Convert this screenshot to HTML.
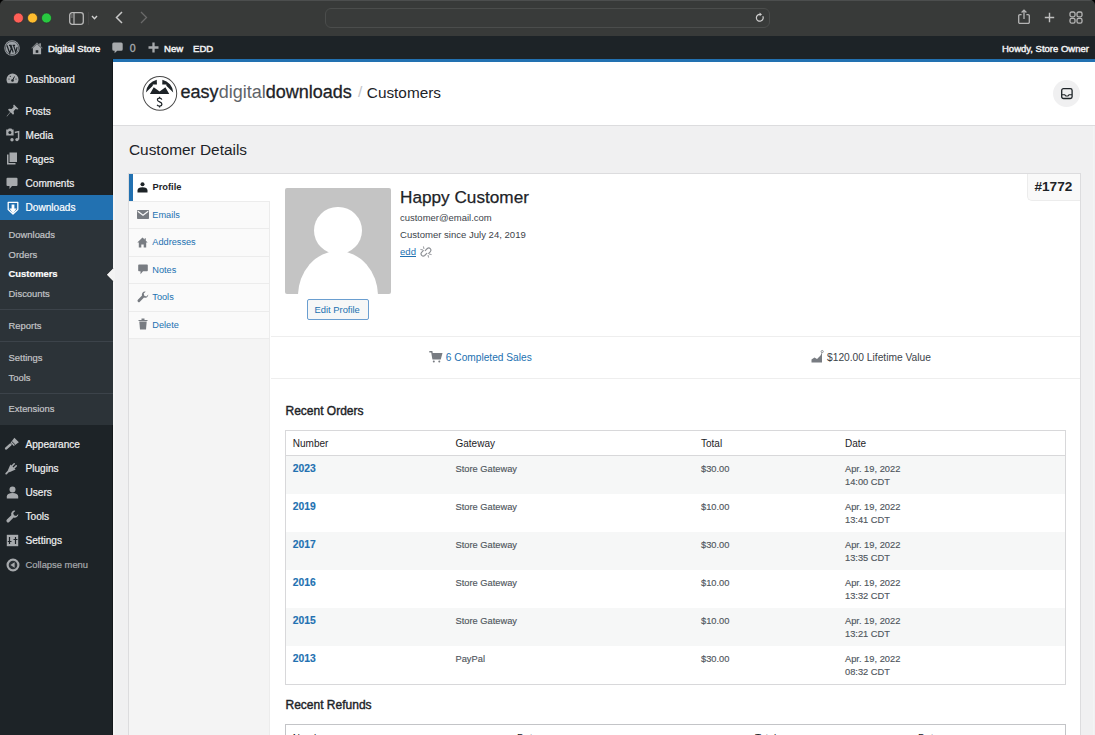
<!DOCTYPE html><html><head><meta charset="utf-8"><style>
*{margin:0;padding:0;box-sizing:border-box}
html,body{width:1095px;height:735px;overflow:hidden;background:#f0f0f1;font-family:"Liberation Sans",sans-serif}
.t{position:absolute;white-space:nowrap;line-height:1}
.a{position:absolute}
svg{position:absolute;overflow:visible}
</style></head><body>
<div class="a" style="left:0;top:0;width:1095px;height:36px;background:#383a39;border-top:1px solid #4c4e4e"></div>
<svg style="left:0;top:0" width="5" height="5"><path d="M0 0H5A5 5 0 0 0 0 5Z" fill="#000"/></svg>
<svg style="left:1090px;top:0" width="5" height="5"><path d="M5 0H0A5 5 0 0 1 5 5Z" fill="#000"/></svg>
<svg style="left:0;top:0" width="60" height="36"><circle cx="18.4" cy="18" r="5" fill="#ff5f57" stroke="#2a2a2a" stroke-width=".6"/><circle cx="32.5" cy="18" r="5" fill="#febc2e" stroke="#2a2a2a" stroke-width=".6"/><circle cx="46.5" cy="18" r="5" fill="#28c840" stroke="#2a2a2a" stroke-width=".6"/></svg>
<svg style="left:69px;top:12px" width="15" height="13"><rect x="0.7" y="0.7" width="13.6" height="11.6" rx="2.5" fill="none" stroke="#b8b8b8" stroke-width="1.3"/><line x1="5" y1="1" x2="5" y2="12" stroke="#b8b8b8" stroke-width="1.2"/><rect x="1.8" y="2.5" width="2" height="1" fill="#888"/><rect x="1.8" y="4.5" width="2" height="1" fill="#888"/></svg>
<div class="a" style="left:88px;top:12px;width:1px;height:13px;background:#444"></div>
<svg style="left:91px;top:15px" width="7" height="5"><path d="M1 1L3.5 3.7L6 1" fill="none" stroke="#d0d0d0" stroke-width="1.4"/></svg>
<svg style="left:115px;top:11px" width="8" height="13"><path d="M7 1L1.5 6.5L7 12" fill="none" stroke="#c8c8c8" stroke-width="1.5"/></svg>
<svg style="left:140px;top:11px" width="8" height="13"><path d="M1 1L6.5 6.5L1 12" fill="none" stroke="#6a6a6a" stroke-width="1.3"/></svg>
<div class="a" style="left:325px;top:8px;width:445px;height:20px;border-radius:6px;background:#393b3a;border:1px solid #4b4d4c"></div>
<svg style="left:755px;top:12px" width="10" height="11"><path d="M7.8 4.2A3.4 3.4 0 1 1 5 2.4" fill="none" stroke="#cfcfcf" stroke-width="1.2"/><path d="M4.6 0.6L7 2.5L4.6 4.3Z" fill="#cfcfcf"/></svg>
<svg style="left:1018px;top:9px" width="12" height="15"><path d="M3.6 5.6H1.9A1.2 1.2 0 0 0 .7 6.8V13.2A1.2 1.2 0 0 0 1.9 14.4H10.1A1.2 1.2 0 0 0 11.3 13.2V6.8A1.2 1.2 0 0 0 10.1 5.6H8.4" fill="none" stroke="#b4b4b4" stroke-width="1.3"/><path d="M6 10V1.3M3.6 3.5L6 1.1L8.4 3.5" fill="none" stroke="#b4b4b4" stroke-width="1.3"/></svg>
<svg style="left:1044px;top:12px" width="11" height="11"><path d="M5.5 .8V10.2M.8 5.5H10.2" stroke="#c0c0c0" stroke-width="1.4"/></svg>
<svg style="left:1069px;top:11px" width="14" height="13"><g fill="none" stroke="#b4b4b4" stroke-width="1.3"><rect x="1" y="1" width="5" height="4.8" rx="1.6"/><rect x="8" y="1" width="5" height="4.8" rx="1.6"/><rect x="1" y="7.3" width="5" height="4.8" rx="1.6"/><rect x="8" y="7.3" width="5" height="4.8" rx="1.6"/></g></svg>
<div class="a" style="left:0;top:36px;width:1095px;height:23px;background:#1d2327"></div>
<svg style="left:3.6px;top:40.2px" width="16" height="16" viewBox="0 0 20 20"><circle cx="10" cy="10" r="9.6" fill="#9ea3a8"/><circle cx="10" cy="10" r="8.3" fill="none" stroke="#2a2f33" stroke-width=".7"/><path d="M3.6 6.6L7.2 16.6L9.1 11L7.6 6.6M6.2 6.6H9.4M10.8 6.6H13.9M11.9 6.6L14.7 15.2L16.4 9M8.7 6.6L11.5 15.6" fill="none" stroke="#1d2327" stroke-width="1.5"/></svg>
<svg style="left:30.5px;top:41.5px" width="12" height="13" viewBox="0 0 12 13"><path d="M6 .4L.2 6.2H1.9V12.2H10.1V6.2H11.8L9.8 4.2V1.2H8.4V2.8Z" fill="#a7aaad"/><path d="M.9 6.6L6 1.6L11.1 6.6" fill="none" stroke="#1d2327" stroke-width=".7"/><rect x="4.7" y="8.2" width="2.6" height="2.6" fill="#1d2327"/></svg>
<div class="t" style="left:48.00px;top:43.77px;font-size:9.6px;font-weight:400;color:#f0f0f1;-webkit-text-stroke:0.45px #f0f0f1">Digital Store</div>

<svg style="left:112px;top:42px" width="11" height="12" viewBox="0 0 11 12"><path d="M1.8 .5H9.2A1.5 1.5 0 0 1 10.7 2V7.3A1.5 1.5 0 0 1 9.2 8.8H5.2L2.6 11.3V8.8H1.8A1.5 1.5 0 0 1 .3 7.3V2A1.5 1.5 0 0 1 1.8 .5Z" fill="#a7aaad"/></svg>
<div class="t" style="left:129.80px;top:43.03px;font-size:10.6px;font-weight:400;color:#a7aaad;-webkit-text-stroke:0.3px #a7aaad">0</div>

<svg style="left:148px;top:42.3px" width="11" height="11"><path d="M5.5 .5V10.5M.5 5.5H10.5" stroke="#a7aaad" stroke-width="2.3"/></svg>
<div class="t" style="left:164.00px;top:43.77px;font-size:9.6px;font-weight:400;color:#f0f0f1;-webkit-text-stroke:0.45px #f0f0f1">New</div>

<div class="t" style="left:193.00px;top:43.77px;font-size:9.6px;font-weight:400;color:#f0f0f1;-webkit-text-stroke:0.45px #f0f0f1">EDD</div>

<div class="t" style="left:1002.00px;top:43.96px;font-size:9.5px;font-weight:400;color:#f0f0f1;-webkit-text-stroke:0.45px #f0f0f1">Howdy, Store Owner</div>

<div class="a" style="left:113px;top:59px;width:982px;height:3px;background:#2271b1"></div>
<div class="a" style="left:0;top:59px;width:113px;height:676px;background:#1d2327"></div>
<div class="a" style="left:0;top:195px;width:113px;height:25px;background:#2271b1"></div>
<div class="a" style="left:0;top:220px;width:113px;height:204.5px;background:#2c3338"></div>
<div class="a" style="left:0;top:308.5px;width:113px;height:1px;background:#3c434a"></div>
<div class="a" style="left:0;top:340.5px;width:113px;height:1px;background:#3c434a"></div>
<div class="a" style="left:0;top:392.5px;width:113px;height:1px;background:#3c434a"></div>
<div class="a" style="left:112px;top:59px;width:1px;height:136px;background:#14181b"></div>
<div class="a" style="left:112px;top:425px;width:1px;height:310px;background:#14181b"></div>
<div class="a" style="left:113px;top:126px;width:2px;height:609px;background:#f5f5f5"></div>
<svg style="left:106px;top:267.5px" width="9" height="14"><path d="M7 0.5L0.8 6.8L7 13.1" fill="none" stroke="#0c0f11" stroke-width="0.9"/><path d="M7 0.5L0.8 6.8L7 13.1H9V0.5Z" fill="#f3f3f3"/></svg>
<div class="t" style="left:25.50px;top:75.25px;font-size:10.1px;font-weight:400;color:#f0f0f1;-webkit-text-stroke:0.2px currentColor">Dashboard</div>

<div class="t" style="left:25.50px;top:106.95px;font-size:10.1px;font-weight:400;color:#f0f0f1;-webkit-text-stroke:0.2px currentColor">Posts</div>

<div class="t" style="left:25.50px;top:130.65px;font-size:10.1px;font-weight:400;color:#f0f0f1;-webkit-text-stroke:0.2px currentColor">Media</div>

<div class="t" style="left:25.50px;top:154.85px;font-size:10.1px;font-weight:400;color:#f0f0f1;-webkit-text-stroke:0.2px currentColor">Pages</div>

<div class="t" style="left:25.50px;top:179.05px;font-size:10.1px;font-weight:400;color:#f0f0f1;-webkit-text-stroke:0.2px currentColor">Comments</div>

<div class="t" style="left:25.50px;top:203.05px;font-size:10.1px;font-weight:400;color:#fff;-webkit-text-stroke:0.2px currentColor">Downloads</div>

<div class="t" style="left:25.50px;top:440.15px;font-size:10.1px;font-weight:400;color:#f0f0f1;-webkit-text-stroke:0.2px currentColor">Appearance</div>

<div class="t" style="left:25.50px;top:464.05px;font-size:10.1px;font-weight:400;color:#f0f0f1;-webkit-text-stroke:0.2px currentColor">Plugins</div>

<div class="t" style="left:25.50px;top:488.05px;font-size:10.1px;font-weight:400;color:#f0f0f1;-webkit-text-stroke:0.2px currentColor">Users</div>

<div class="t" style="left:25.50px;top:512.05px;font-size:10.1px;font-weight:400;color:#f0f0f1;-webkit-text-stroke:0.2px currentColor">Tools</div>

<div class="t" style="left:25.50px;top:535.95px;font-size:10.1px;font-weight:400;color:#f0f0f1;-webkit-text-stroke:0.2px currentColor">Settings</div>

<div class="t" style="left:25.50px;top:559.64px;font-size:9.4px;font-weight:400;color:#a7aaad;-webkit-text-stroke:0.2px #a7aaad">Collapse menu</div>

<div class="t" style="left:8.60px;top:229.64px;font-size:9.4px;font-weight:400;color:#c3c4c7;-webkit-text-stroke:0.2px currentColor">Downloads</div>

<div class="t" style="left:8.60px;top:249.64px;font-size:9.4px;font-weight:400;color:#c3c4c7;-webkit-text-stroke:0.2px currentColor">Orders</div>

<div class="t" style="left:8.60px;top:269.44px;font-size:9.4px;font-weight:700;color:#fff;-webkit-text-stroke:0.2px currentColor">Customers</div>

<div class="t" style="left:8.60px;top:288.84px;font-size:9.4px;font-weight:400;color:#c3c4c7;-webkit-text-stroke:0.2px currentColor">Discounts</div>

<div class="t" style="left:8.60px;top:321.04px;font-size:9.4px;font-weight:400;color:#c3c4c7;-webkit-text-stroke:0.2px currentColor">Reports</div>

<div class="t" style="left:8.60px;top:352.84px;font-size:9.4px;font-weight:400;color:#c3c4c7;-webkit-text-stroke:0.2px currentColor">Settings</div>

<div class="t" style="left:8.60px;top:372.54px;font-size:9.4px;font-weight:400;color:#c3c4c7;-webkit-text-stroke:0.2px currentColor">Tools</div>

<div class="t" style="left:8.60px;top:404.34px;font-size:9.4px;font-weight:400;color:#c3c4c7;-webkit-text-stroke:0.2px currentColor">Extensions</div>

<svg style="left:6px;top:73px" width="13" height="11" viewBox="0 0 13 11"><path d="M6.5 .5A6 6 0 0 0 .5 6.5C.5 8 1 9.3 1.8 10.3H11.2C12 9.3 12.5 8 12.5 6.5A6 6 0 0 0 6.5 .5Z" fill="#a7aaad"/><circle cx="6.5" cy="7.5" r="1.3" fill="#1d2327"/><path d="M6.5 7.5L8.5 3.5" stroke="#1d2327" stroke-width="1"/><circle cx="3" cy="6" r=".6" fill="#1d2327"/><circle cx="4.3" cy="3.3" r=".6" fill="#1d2327"/><circle cx="10" cy="6" r=".6" fill="#1d2327"/></svg>
<svg style="left:6px;top:104px" width="13" height="13" viewBox="0 0 13 13"><path d="M8 .5L12.5 5L11.3 5.6L9.6 5.1L7.6 7.2L8 9.7L7 10.7L4.6 8.3L1 12.5L.6 12.2L4.2 8L2 5.7L3 4.7L5.6 5L7.6 3L7.2 1.5Z" fill="#a7aaad"/></svg>
<svg style="left:5px;top:127.5px" width="15" height="14" viewBox="0 0 15 14"><path d="M1.2 1.6H3L3.8 .6H6.4L7.2 1.6H8.6V7.6H1.2Z" fill="#a7aaad"/><circle cx="4.9" cy="4.5" r="1.5" fill="#1d2327"/><path d="M9.8 4.6L13.6 3.6V11.4" fill="none" stroke="#a7aaad" stroke-width="1.5"/><circle cx="7" cy="11.8" r="1.7" fill="#a7aaad"/><circle cx="12" cy="11.6" r="1.7" fill="#a7aaad"/></svg>
<svg style="left:6px;top:152px" width="12" height="13" viewBox="0 0 12 13"><path d="M3.5 .5H11V10H3.5Z" fill="#a7aaad"/><path d="M1 2.5H2.5V11H9.5V12.5H1Z" fill="#a7aaad"/></svg>
<svg style="left:6px;top:177px" width="12" height="13" viewBox="0 0 12 13"><path d="M1.5 .8H10.5A1 1 0 0 1 11.5 1.8V8A1 1 0 0 1 10.5 9H6L3.5 12V9H1.5A1 1 0 0 1 .5 8V1.8A1 1 0 0 1 1.5 .8Z" fill="#a7aaad"/></svg>
<svg style="left:7px;top:200.5px" width="12" height="14" viewBox="0 0 12 14"><path d="M1.2 8.6V1.3H10.8V8.6L6 13Z" fill="none" stroke="#fff" stroke-width="1.3" stroke-linejoin="round"/><path d="M4.6 3.4H7.4V7.6H9.6L6 12.4L2.4 7.6H4.6Z" fill="#fff"/></svg>
<svg style="left:4px;top:436px" width="17" height="15" viewBox="0 0 17 15"><path d="M2.2 12.4L6.4 8.6" stroke="#a7aaad" stroke-width="2.6" stroke-linecap="round"/><path d="M6.64 6.84L10.34 1.74L14.86 6.26L9.76 9.96Z" fill="#a7aaad"/><path d="M7.9 5.6L11 8.7" stroke="#1d2327" stroke-width=".9"/></svg>
<svg style="left:4px;top:460px" width="17" height="15" viewBox="0 0 17 15"><path d="M2.2 13.6L4.6 11.2" stroke="#a7aaad" stroke-width="1.8" stroke-linecap="round"/><path d="M3.75 10.55L6.45 4.45L11.55 9.55L5.45 12.25Z" fill="#a7aaad"/><path d="M7.98 5.98L10.18 3.78M10.02 8.02L12.22 5.82" stroke="#a7aaad" stroke-width="1.6" stroke-linecap="round"/></svg>
<svg style="left:6px;top:485.8px" width="13" height="13" viewBox="0 0 13 13"><circle cx="6.5" cy="3.5" r="3" fill="#a7aaad"/><path d="M.8 12.5V10.5C.8 8.5 3 7 6.5 7S12.2 8.5 12.2 10.5V12.5Z" fill="#a7aaad"/></svg>
<svg style="left:6px;top:509.8px" width="13" height="13" viewBox="0 0 13 13"><path d="M8.8 .5A3.6 3.6 0 0 0 5.3 5.2L.9 9.6A1.6 1.6 0 0 0 3.2 11.9L7.6 7.5A3.6 3.6 0 0 0 12.3 4L10.2 6.1L7.9 5.3L7.2 3L9.3 1A3.6 3.6 0 0 0 8.8 .5Z" fill="#a7aaad"/></svg>
<svg style="left:6px;top:533.8px" width="13" height="13" viewBox="0 0 13 13"><rect x=".8" y=".8" width="11.4" height="11.4" fill="#a7aaad"/><path d="M3.5 3V10M9.5 3V10M7.5 5.5H11.5M1.8 7.5H5.5" stroke="#1d2327" stroke-width="1.2"/></svg>
<svg style="left:5.5px;top:557.5px" width="14" height="14" viewBox="0 0 14 14"><circle cx="7" cy="7" r="5.4" fill="#2a3035" stroke="#a7aaad" stroke-width="2.2"/><path d="M8.6 4.2V9.8L4.4 7Z" fill="#a7aaad"/></svg>
<div class="a" style="left:113px;top:62px;width:982px;height:64px;background:#fff;border-bottom:1px solid #dcdcde"></div>
<svg style="left:141px;top:74px" width="38" height="39" viewBox="0 0 716 735"><circle cx="355" cy="366" r="318" fill="#fff" stroke="#4a4a4a" stroke-width="19"/><path d="M92 348A264 264 0 0 1 297 108L300 200L222 200L222 222Z" fill="#1d2327"/><path d="M608 348A264 264 0 0 0 403 108L400 200L478 200L478 222Z" fill="#1d2327"/><path d="M168 378L240 252L350 328L460 252L532 378Z" fill="#1d2327"/><path d="M392 482C382 448 308 442 310 490C313 532 394 522 394 568C394 612 322 614 304 582M350 428V458M350 604V632" fill="none" stroke="#1d2327" stroke-width="24"/></svg>
<div class="t" style="left:180.6px;top:83.36px;font-size:18px;color:#1d2327"><span style="-webkit-text-stroke:0.3px #1d2327">easy</span><span style="color:#5f6469">digital</span><span style="-webkit-text-stroke:0.3px #1d2327">downloads</span></div>
<div class="t" style="left:358.00px;top:84.38px;font-size:15.5px;font-weight:400;color:#c3c4c7;">/</div>

<div class="t" style="left:366.80px;top:84.51px;font-size:15.35px;font-weight:400;color:#1d2327;">Customers</div>

<div class="a" style="left:1053px;top:80px;width:27px;height:27px;border-radius:50%;background:#f0f0f1"></div>
<svg style="left:1061px;top:88px" width="12" height="11" viewBox="0 0 12 11"><rect x=".7" y=".7" width="10.4" height="9.8" rx="1.8" fill="none" stroke="#1d2327" stroke-width="1.3"/><path d="M1 6.8H3.8L4.8 8H7L8 6.8H11" fill="none" stroke="#1d2327" stroke-width="1.1"/></svg>
<div class="t" style="left:129.00px;top:142.26px;font-size:15.4px;font-weight:400;color:#1d2327;">Customer Details</div>

<div class="a" style="left:128px;top:173px;width:953px;height:600px;background:#fff;border:1px solid #dcdcde"></div>
<div class="a" style="left:129px;top:174px;width:141px;height:600px;background:#f4f4f4;border-right:1px solid #ececec"></div>
<div class="a" style="left:129px;top:174px;width:142px;height:27.0px;background:#fff"></div>
<div class="a" style="left:129px;top:174px;width:4px;height:27.0px;background:#2271b1"></div>
<div class="a" style="left:129px;top:201.0px;width:141px;height:27.4px;background:#fafafa;border-top:1px solid #ececec;border-right:1px solid #ececec"></div>
<div class="a" style="left:129px;top:228.4px;width:141px;height:27.3px;background:#fafafa;border-top:1px solid #ececec;border-right:1px solid #ececec"></div>
<div class="a" style="left:129px;top:255.7px;width:141px;height:27.5px;background:#fafafa;border-top:1px solid #ececec;border-right:1px solid #ececec"></div>
<div class="a" style="left:129px;top:283.2px;width:141px;height:27.4px;background:#fafafa;border-top:1px solid #ececec;border-right:1px solid #ececec"></div>
<div class="a" style="left:129px;top:310.6px;width:141px;height:27.4px;background:#fafafa;border-top:1px solid #ececec;border-right:1px solid #ececec"></div>
<div class="a" style="left:129px;top:337.6px;width:141px;height:1px;background:#ececec"></div>
<div class="t" style="left:152.50px;top:183.13px;font-size:9.3px;font-weight:700;color:#1d2327;">Profile</div>

<div class="t" style="left:152.30px;top:210.71px;font-size:9.2px;font-weight:400;color:#2271b1;">Emails</div>

<div class="t" style="left:152.30px;top:238.01px;font-size:9.2px;font-weight:400;color:#2271b1;">Addresses</div>

<div class="t" style="left:152.30px;top:265.51px;font-size:9.2px;font-weight:400;color:#2271b1;">Notes</div>

<div class="t" style="left:152.30px;top:293.01px;font-size:9.2px;font-weight:400;color:#2271b1;">Tools</div>

<div class="t" style="left:152.30px;top:320.51px;font-size:9.2px;font-weight:400;color:#2271b1;">Delete</div>

<svg style="left:137px;top:182px" width="11" height="11" viewBox="0 0 11 11"><circle cx="5.5" cy="2.3" r="2" fill="#1d2327"/><path d="M.5 10.5V8.5C.5 6.5 2.5 5.3 5.5 5.3S10.5 6.5 10.5 8.5V10.5Z" fill="#1d2327"/></svg>
<svg style="left:137px;top:210px" width="12" height="9" viewBox="0 0 12 9"><rect x="0" y="0" width="12" height="9" rx=".8" fill="#787c82"/><path d="M.8 1.2L6 5.2L11.2 1.2" fill="none" stroke="#fafafa" stroke-width="1.2"/></svg>
<svg style="left:137px;top:237px" width="11" height="11" viewBox="0 0 11 11"><path d="M5.5.5L.3 5.5H1.8V10.5H4.3V7.5H6.7V10.5H9.2V5.5H10.7L8.8 3.7V1.3H7.7V2.6Z" fill="#787c82"/></svg>
<svg style="left:138px;top:264.3px" width="10" height="11" viewBox="0 0 10 11"><path d="M1 .5H9A.8.8 0 0 1 9.8 1.3V6.5A.8.8 0 0 1 9 7.3H5L2.5 10.2V7.3H1A.8.8 0 0 1 .2 6.5V1.3A.8.8 0 0 1 1 .5Z" fill="#787c82"/></svg>
<svg style="left:137px;top:291px" width="12" height="12" viewBox="0 0 12 12"><path d="M8.2 .4A3.2 3.2 0 0 0 5 4.6L.9 8.7A1.4 1.4 0 0 0 2.9 10.7L7 6.6A3.2 3.2 0 0 0 11.3 3.5L9.4 5.4L7.3 4.7L6.7 2.6L8.6 .7Z" fill="#787c82"/></svg>
<svg style="left:138px;top:318px" width="10" height="12" viewBox="0 0 10 12"><path d="M.5 2H9.5V3H.5ZM3.5 .5H6.5V2H3.5Z" fill="#787c82"/><path d="M1.3 3.6H8.7L8 11.5H2Z" fill="#787c82"/></svg>
<div class="a" style="left:1027px;top:174px;width:53px;height:27px;background:#f9f9f9;border-left:1px solid #ececec;border-bottom:1px solid #ececec;border-bottom-left-radius:5px"></div>
<div class="t" style="left:1034.50px;top:179.89px;font-size:13.6px;font-weight:700;color:#1d2327;">#1772</div>

<div class="a" style="left:284.7px;top:188.2px;width:106px;height:105.6px;background:#c4c4c4;border-radius:2px;overflow:hidden"><div class="a" style="left:29.5px;top:18.5px;width:47.6px;height:47.6px;border-radius:50%;background:#fff"></div><div class="a" style="left:13.3px;top:63.2px;width:79.7px;height:90px;border-radius:50%;background:#fff"></div></div>
<div class="a" style="left:306.7px;top:298.8px;width:62px;height:21.3px;border:1px solid #6a9ed0;border-radius:2px;background:#f6f7f7"></div>
<div class="t" style="left:314.50px;top:305.04px;font-size:9.4px;font-weight:400;color:#2271b1;">Edit Profile</div>

<div class="t" style="left:400.00px;top:189.44px;font-size:17.2px;font-weight:400;color:#1d2327;-webkit-text-stroke:0.25px #1d2327">Happy Customer</div>

<div class="t" style="left:400.00px;top:212.58px;font-size:9.47px;font-weight:400;color:#3c434a;">customer@email.com</div>

<div class="t" style="left:400.00px;top:229.71px;font-size:9.56px;font-weight:400;color:#3c434a;">Customer since July 24, 2019</div>

<div class="t" style="left:400.00px;top:246.77px;font-size:9.6px;font-weight:400;color:#2271b1;text-decoration:underline;text-decoration-thickness:0.6px;text-underline-offset:1.2px">edd</div>

<svg style="left:420px;top:246px" width="12" height="12" viewBox="0 0 12 12"><g fill="none" stroke="#8c8f94" stroke-width="1.15" stroke-linecap="round"><path d="M5.2 4.6L7.3 2.5A2.2 2.2 0 0 1 10.4 5.6L8.7 7.3"/><path d="M3.3 4.7L1.6 6.4A2.2 2.2 0 0 0 4.7 9.5L6.8 7.4"/><path d="M3.5 .8L3.9 2.6M.8 3.5L2.6 3.9M8.5 11.2L8.1 9.4M11.2 8.5L9.4 8.1" stroke-width=".9"/></g></svg>
<div class="a" style="left:271px;top:336px;width:809px;height:1px;background:#eeeeee"></div>
<div class="a" style="left:271px;top:378px;width:809px;height:1px;background:#eeeeee"></div>
<svg style="left:429px;top:351px" width="13" height="12" viewBox="0 0 13 12"><path d="M.3 .8H2.8L4 7.8H11.2L12.6 2.6H3.6" fill="none" stroke="#787c82" stroke-width="1.4"/><path d="M3.6 2.6H12.6L11.3 7.5H4.2Z" fill="#787c82"/><circle cx="4.8" cy="10.6" r="1" fill="#787c82"/><circle cx="10.3" cy="10.6" r="1" fill="#787c82"/></svg>
<div class="t" style="left:445.80px;top:353.18px;font-size:10.18px;font-weight:400;color:#2271b1;">6 Completed Sales</div>

<svg style="left:811px;top:350px" width="13" height="13" viewBox="0 0 13 13"><path d="M.5 12.5V9.5L3.5 7.5L6 9L9.5 5.5L11 2.2V12.5Z" fill="#787c82"/><circle cx="11.2" cy="1.6" r="1.1" fill="none" stroke="#787c82" stroke-width=".8"/></svg>
<div class="t" style="left:827.00px;top:353.13px;font-size:10.24px;font-weight:400;color:#3c434a;">$120.00 Lifetime Value</div>

<div class="t" style="left:285.50px;top:404.94px;font-size:12px;font-weight:400;color:#1d2327;-webkit-text-stroke:0.4px #1d2327">Recent Orders</div>

<div class="a" style="left:285px;top:429.5px;width:781px;height:255.5px;background:#fff;border:1px solid #d8d8da"></div>
<div class="a" style="left:286px;top:454.5px;width:779px;height:1px;background:#d8d8da"></div>
<div class="t" style="left:292.80px;top:438.54px;font-size:10px;font-weight:400;color:#1d2327;">Number</div>

<div class="t" style="left:455.50px;top:438.54px;font-size:10px;font-weight:400;color:#1d2327;">Gateway</div>

<div class="t" style="left:701.00px;top:438.54px;font-size:10px;font-weight:400;color:#1d2327;">Total</div>

<div class="t" style="left:845.00px;top:438.54px;font-size:10px;font-weight:400;color:#1d2327;">Date</div>

<div class="a" style="left:286px;top:455.5px;width:779px;height:38px;background:#f6f7f7"></div>
<div class="t" style="left:292.80px;top:464.18px;font-size:10.3px;font-weight:700;color:#2271b1;-webkit-text-stroke:0.15px #2271b1">2023</div>

<div class="t" style="left:455.50px;top:464.53px;font-size:9.3px;font-weight:400;color:#50575e;-webkit-text-stroke:0.15px #50575e">Store Gateway</div>

<div class="t" style="left:701.00px;top:464.53px;font-size:9.3px;font-weight:400;color:#50575e;-webkit-text-stroke:0.15px #50575e">$30.00</div>

<div class="t" style="left:845.00px;top:464.53px;font-size:9.3px;font-weight:400;color:#50575e;-webkit-text-stroke:0.15px #50575e">Apr. 19, 2022</div>

<div class="t" style="left:845.00px;top:477.53px;font-size:9.3px;font-weight:400;color:#50575e;-webkit-text-stroke:0.15px #50575e">14:00 CDT</div>

<div class="t" style="left:292.80px;top:502.18px;font-size:10.3px;font-weight:700;color:#2271b1;-webkit-text-stroke:0.15px #2271b1">2019</div>

<div class="t" style="left:455.50px;top:502.53px;font-size:9.3px;font-weight:400;color:#50575e;-webkit-text-stroke:0.15px #50575e">Store Gateway</div>

<div class="t" style="left:701.00px;top:502.53px;font-size:9.3px;font-weight:400;color:#50575e;-webkit-text-stroke:0.15px #50575e">$10.00</div>

<div class="t" style="left:845.00px;top:502.53px;font-size:9.3px;font-weight:400;color:#50575e;-webkit-text-stroke:0.15px #50575e">Apr. 19, 2022</div>

<div class="t" style="left:845.00px;top:515.53px;font-size:9.3px;font-weight:400;color:#50575e;-webkit-text-stroke:0.15px #50575e">13:41 CDT</div>

<div class="a" style="left:286px;top:531.5px;width:779px;height:38px;background:#f6f7f7"></div>
<div class="t" style="left:292.80px;top:540.18px;font-size:10.3px;font-weight:700;color:#2271b1;-webkit-text-stroke:0.15px #2271b1">2017</div>

<div class="t" style="left:455.50px;top:540.53px;font-size:9.3px;font-weight:400;color:#50575e;-webkit-text-stroke:0.15px #50575e">Store Gateway</div>

<div class="t" style="left:701.00px;top:540.53px;font-size:9.3px;font-weight:400;color:#50575e;-webkit-text-stroke:0.15px #50575e">$30.00</div>

<div class="t" style="left:845.00px;top:540.53px;font-size:9.3px;font-weight:400;color:#50575e;-webkit-text-stroke:0.15px #50575e">Apr. 19, 2022</div>

<div class="t" style="left:845.00px;top:553.53px;font-size:9.3px;font-weight:400;color:#50575e;-webkit-text-stroke:0.15px #50575e">13:35 CDT</div>

<div class="t" style="left:292.80px;top:578.18px;font-size:10.3px;font-weight:700;color:#2271b1;-webkit-text-stroke:0.15px #2271b1">2016</div>

<div class="t" style="left:455.50px;top:578.53px;font-size:9.3px;font-weight:400;color:#50575e;-webkit-text-stroke:0.15px #50575e">Store Gateway</div>

<div class="t" style="left:701.00px;top:578.53px;font-size:9.3px;font-weight:400;color:#50575e;-webkit-text-stroke:0.15px #50575e">$10.00</div>

<div class="t" style="left:845.00px;top:578.53px;font-size:9.3px;font-weight:400;color:#50575e;-webkit-text-stroke:0.15px #50575e">Apr. 19, 2022</div>

<div class="t" style="left:845.00px;top:591.53px;font-size:9.3px;font-weight:400;color:#50575e;-webkit-text-stroke:0.15px #50575e">13:32 CDT</div>

<div class="a" style="left:286px;top:607.5px;width:779px;height:38px;background:#f6f7f7"></div>
<div class="t" style="left:292.80px;top:616.18px;font-size:10.3px;font-weight:700;color:#2271b1;-webkit-text-stroke:0.15px #2271b1">2015</div>

<div class="t" style="left:455.50px;top:616.53px;font-size:9.3px;font-weight:400;color:#50575e;-webkit-text-stroke:0.15px #50575e">Store Gateway</div>

<div class="t" style="left:701.00px;top:616.53px;font-size:9.3px;font-weight:400;color:#50575e;-webkit-text-stroke:0.15px #50575e">$10.00</div>

<div class="t" style="left:845.00px;top:616.53px;font-size:9.3px;font-weight:400;color:#50575e;-webkit-text-stroke:0.15px #50575e">Apr. 19, 2022</div>

<div class="t" style="left:845.00px;top:629.53px;font-size:9.3px;font-weight:400;color:#50575e;-webkit-text-stroke:0.15px #50575e">13:21 CDT</div>

<div class="t" style="left:292.80px;top:654.18px;font-size:10.3px;font-weight:700;color:#2271b1;-webkit-text-stroke:0.15px #2271b1">2013</div>

<div class="t" style="left:455.50px;top:654.53px;font-size:9.3px;font-weight:400;color:#50575e;-webkit-text-stroke:0.15px #50575e">PayPal</div>

<div class="t" style="left:701.00px;top:654.53px;font-size:9.3px;font-weight:400;color:#50575e;-webkit-text-stroke:0.15px #50575e">$30.00</div>

<div class="t" style="left:845.00px;top:654.53px;font-size:9.3px;font-weight:400;color:#50575e;-webkit-text-stroke:0.15px #50575e">Apr. 19, 2022</div>

<div class="t" style="left:845.00px;top:667.53px;font-size:9.3px;font-weight:400;color:#50575e;-webkit-text-stroke:0.15px #50575e">08:32 CDT</div>

<div class="t" style="left:285.50px;top:699.44px;font-size:12px;font-weight:400;color:#1d2327;-webkit-text-stroke:0.4px #1d2327">Recent Refunds</div>

<div class="a" style="left:285px;top:724px;width:781px;height:40px;background:#fff;border:1px solid #c3c4c7"></div>
<div class="t" style="left:292.80px;top:733.83px;font-size:10px;font-weight:400;color:#1d2327;">Number</div>

<div class="t" style="left:517.00px;top:733.83px;font-size:10px;font-weight:400;color:#1d2327;">Date</div>

<div class="t" style="left:755.00px;top:733.83px;font-size:10px;font-weight:400;color:#1d2327;">Total</div>

<div class="t" style="left:918.00px;top:733.83px;font-size:10px;font-weight:400;color:#1d2327;">Date</div>

<div class="a" style="left:1093px;top:126px;width:1px;height:609px;background:#f4f4f4"></div>
</body></html>
